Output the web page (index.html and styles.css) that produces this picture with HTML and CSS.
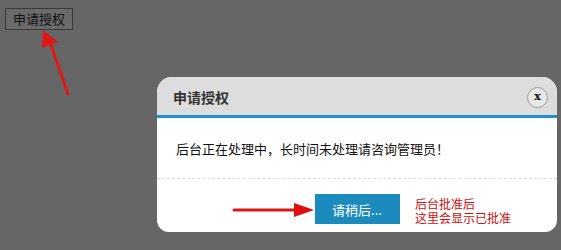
FILE: index.html
```html
<!DOCTYPE html>
<html lang="zh-CN">
  <head>
    <meta charset="UTF-8" />
    <title>申请授权</title>
    <link rel="stylesheet" href="styles.css">
  </head>
  <body>
    <button class="apply-btn">申请授权</button>

    <!-- arrow pointing at the apply button -->
    <svg class="note-arrow arrow-up" width="40" height="70" viewBox="0 0 40 70">
      <line x1="30" y1="66" x2="12" y2="14" stroke="#e01818" stroke-width="3" stroke-linecap="round" />
      <polygon points="5,2 4,20 20,14" fill="#e01818" />
    </svg>

    <!-- Dialog -->
    <div class="dialog">
      <div class="dialog-head">
        <span class="dialog-title">申请授权</span>
        <span class="close-btn">x</span>
      </div>
      <div class="dialog-body">后台正在处理中，长时间未处理请咨询管理员！</div>
      <div class="dialog-foot">
        <button class="wait-btn">请稍后...</button>
        <div class="note-text">
          <div>后台批准后</div>
          <div>这里会显示已批准</div>
        </div>
        <svg class="note-arrow arrow-right" width="84" height="16" viewBox="0 0 84 16">
          <line x1="2" y1="8" x2="66" y2="8" stroke="#d81818" stroke-width="3" stroke-linecap="round" />
          <polygon points="82,8 62,1 62,15" fill="#e01010" />
        </svg>
      </div>
    </div>
  </body>
</html>
```

FILE: styles.css
```css
body {
  margin: 0;
  width: 561px;
  height: 250px;
  background: #666666;
  font-family: "Noto Sans CJK SC", sans-serif;
  position: relative;
  overflow: hidden;
}

.apply-btn {
  margin: 8px 0 0 5px;
  width: 68px;
  height: 22px;
  padding: 0;
  background: #6a6a6a;
  border: 1px solid #3a3a3a;
  color: #111;
  font-family: "Noto Sans CJK SC", sans-serif;
  font-size: 13px;
  line-height: 20px;
}

.note-arrow {
  position: absolute;
}

.arrow-up {
  left: 38px;
  top: 28px;
}

.dialog {
  position: absolute;
  left: 157px;
  top: 77px;
  width: 400px;
  height: 155px;
  background: #fff;
  border-radius: 15px 15px 12px 12px;
  overflow: hidden;
  display: flex;
  flex-direction: column;
}

.dialog-head {
  height: 36px;
  background: #dddddd;
  border-bottom: 3px solid #1e8fd0;
  display: flex;
  align-items: center;
  justify-content: space-between;
  padding: 2px 9px 0 16px;
}

.dialog-title {
  font-size: 14px;
  font-weight: bold;
  color: #333;
}

.close-btn {
  width: 19px;
  height: 19px;
  border: 1px solid #999;
  border-radius: 50%;
  background: #e8e8e8;
  font-family: "DejaVu Serif", serif;
  font-weight: bold;
  font-size: 11px;
  line-height: 17px;
  text-align: center;
  color: #111;
}

.dialog-body {
  height: 60px;
  border-bottom: 1px dashed #dcdcdc;
  padding-left: 19px;
  display: flex;
  align-items: center;
  font-size: 13px;
  color: #111;
}

.dialog-foot {
  flex: 1;
  position: relative;
  display: flex;
  justify-content: center;
  padding-top: 15px;
}

.wait-btn {
  width: 85px;
  height: 30px;
  padding: 0;
  border: none;
  background: #1b8bbd;
  color: #fff;
  font-family: "Noto Sans CJK SC", sans-serif;
  font-size: 13px;
}

.note-text {
  position: absolute;
  left: 258px;
  top: 18px;
  font-size: 12px;
  line-height: 14px;
  color: #cc1111;
}

.arrow-right {
  left: 75px;
  top: 23px;
}
```
